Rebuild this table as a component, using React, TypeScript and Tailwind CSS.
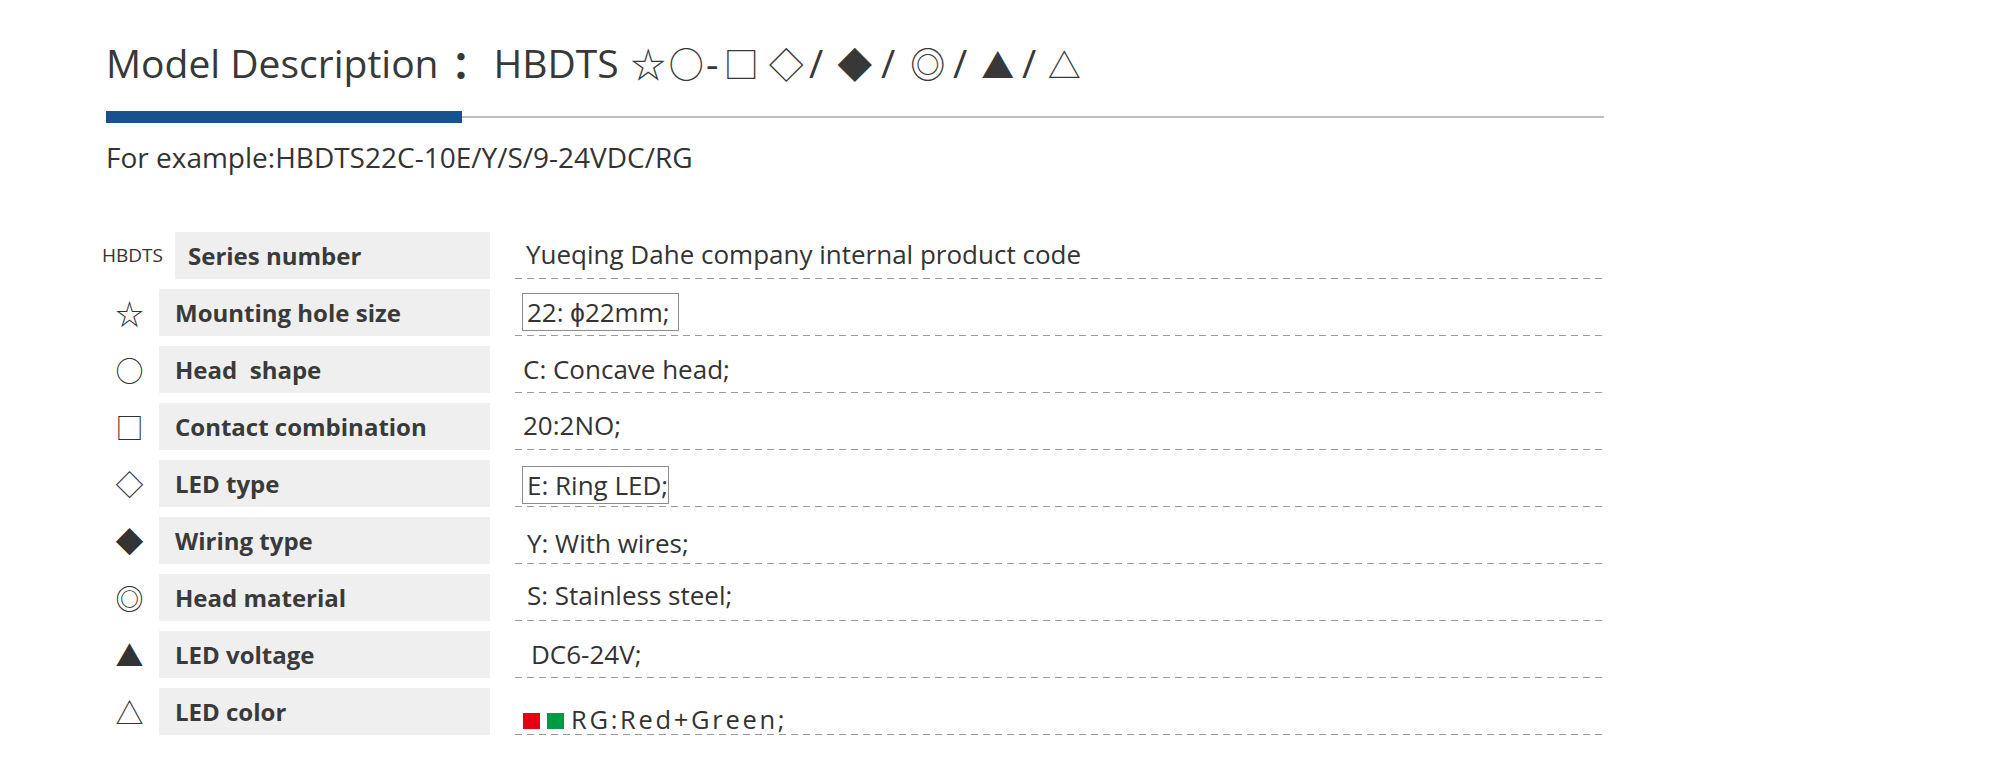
import React from "react";

const CJK = "font-['Noto_Sans_CJK_SC',sans-serif]";

// glyph ink widths and the gap before each, measured off the artwork
const TITLE_SYMS = [
  { g: "☆", w: 29, gap: 15, size: "text-[35px]", cjk: true },
  { g: "○", w: 27, gap: 10, size: "text-[35px]", cjk: true },
  { g: "-", w: 9, gap: 8, size: "text-[39px]", cjk: false },
  { g: "□", w: 25, gap: 12, size: "text-[35px]", cjk: true },
  { g: "◇", w: 31, gap: 17, size: "text-[35px]", cjk: true },
  { g: "/", w: 13, gap: 8, size: "text-[39px]", cjk: false },
  { g: "◆", w: 34, gap: 15, size: "text-[35px]", cjk: true },
  { g: "/", w: 13, gap: 10, size: "text-[39px]", cjk: false },
  { g: "◎", w: 32, gap: 17, size: "text-[35px]", cjk: true },
  { g: "/", w: 13, gap: 10, size: "text-[39px]", cjk: false },
  { g: "▲", w: 30, gap: 16, size: "text-[33px]", cjk: true },
  { g: "/", w: 13, gap: 10, size: "text-[39px]", cjk: false },
  { g: "△", w: 27, gap: 15, size: "text-[33px]", cjk: true },
];

type Row = {
  sym: string;
  label: string;
  value: string;
  x: number;
  lift: number;
  boxed?: boolean;
  pr?: number;
  leds?: boolean;
};

const ROWS: Row[] = [
  { sym: "HBDTS", label: "Series number", value: "Yueqing Dahe company internal product code", x: 11, lift: 14 },
  { sym: "☆", label: "Mounting hole size", value: "22: ϕ22mm;", x: 7, lift: 4, boxed: true, pr: 8 },
  { sym: "○", label: "Head  shape", value: "C: Concave head;", x: 8, lift: 13 },
  { sym: "□", label: "Contact combination", value: "20:2NO;", x: 8, lift: 14 },
  { sym: "◇", label: "LED type", value: "E: Ring LED;", x: 7, lift: 2, boxed: true, pr: 0 },
  { sym: "◆", label: "Wiring type", value: "Y: With wires;", x: 12, lift: 10 },
  { sym: "◎", label: "Head material", value: "S: Stainless steel;", x: 12, lift: 15 },
  { sym: "▲", label: "LED voltage", value: "DC6-24V;", x: 16, lift: 13 },
  { sym: "△", label: "LED color", value: "RG:Red+Green;", x: 8, lift: 5, leds: true },
];

function SpecRow({ row, first }: { row: Row; first: boolean }) {
  return (
    <div className="flex h-[57px] items-start">
      <div className="flex h-[47px] w-[53px] items-center justify-center">
        {first ? (
          <span className="whitespace-nowrap text-[19px] text-[#333]">{row.sym}</span>
        ) : (
          <span className={`${CJK} pr-[6px] text-[28px] leading-none text-[#333]`}>{row.sym}</span>
        )}
      </div>
      <div
        className={`flex h-[47px] items-center bg-[#efefef] text-[24px] font-bold text-[#3a3a3a] ${
          first ? "ml-[16px] w-[315px] pl-[13px]" : "w-[331px] pl-[16px]"
        }`}
      >
        <span className="whitespace-pre">{row.label}</span>
      </div>
      <div className="ml-[25px] flex w-[1090px] flex-col">
        <div
          className="flex h-[46px] items-end"
          style={{ paddingLeft: row.x, paddingBottom: row.boxed ? row.lift : row.lift - 3 }}
        >
          {row.boxed ? (
            <span
              className="border border-[#8c8c8c] pl-[4px] text-[26px] leading-[36px] text-[#333]"
              style={{ paddingRight: row.pr }}
            >
              {row.value}
            </span>
          ) : row.leds ? (
            <span className="flex items-end gap-[7px] text-[25.5px] leading-[26px] text-[#333]">
              <span className="mb-[3px] h-[16px] w-[17px] bg-[#e60012]" />
              <span className="mb-[3px] h-[16px] w-[17px] bg-[#009944]" />
              <span className="tracking-[2.7px]">{row.value}</span>
            </span>
          ) : (
            <span className="text-[26px] leading-[26px] text-[#333]">{row.value}</span>
          )}
        </div>
        <div className="h-px w-full bg-[repeating-linear-gradient(to_right,#9a9a9a_0_7px,transparent_7px_12px)]" />
      </div>
    </div>
  );
}

export default function App() {
  return (
    <div className="h-[760px] w-[2000px] overflow-hidden bg-white font-['Open_Sans',sans-serif] text-[#333]">
      <div className="pl-[106px] pt-[42px]">
        <h1 className="flex h-[39px] items-baseline whitespace-nowrap text-[39px] font-normal leading-[39px] text-[#383838]">
          <span>Model Description</span>
          <span className={`${CJK} ml-[13px] text-[38px] font-bold`}>：</span>
          <span className="ml-[4px]">HBDTS</span>
          {TITLE_SYMS.map((s, i) => (
            <span
              key={i}
              className={`flex justify-center ${s.size} ${s.cjk ? CJK : ""}`}
              style={{ width: s.w, marginLeft: s.gap }}
            >
              {s.g}
            </span>
          ))}
        </h1>

        <div className="mt-[30px] flex h-[12px] w-[1498px] items-center">
          <div className="h-[12px] w-[356px] bg-[#17528f]" />
          <div className="h-[2px] flex-1 bg-[#bdbdbd]" />
        </div>

        <p className="mt-[20px] text-[28px] leading-[28px] text-[#333]">
          For example:HBDTS22C-10E/Y/S/9-24VDC/RG
        </p>

        <div className="mt-[61px] flex flex-col">
          {ROWS.map((r, i) => (
            <SpecRow key={r.label} row={r} first={i === 0} />
          ))}
        </div>
      </div>
    </div>
  );
}
